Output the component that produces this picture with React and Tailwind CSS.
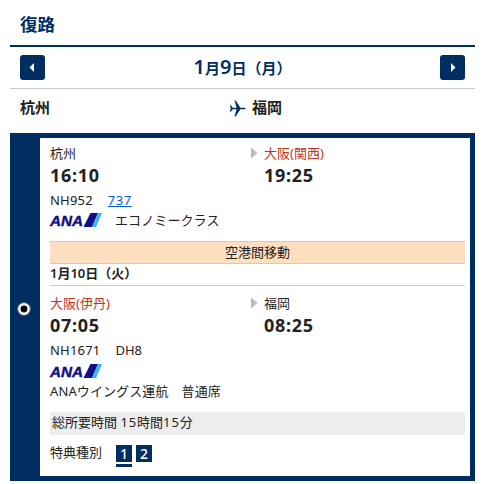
const AirlineLogo = () => (
  <svg width="52" height="16" viewBox="0 0 52 16" className="block overflow-visible" aria-label="ANA">
    <text
      x="0"
      y="13"
      textLength="33"
      lengthAdjust="spacingAndGlyphs"
      fill="#110d87"
      stroke="#110d87"
      strokeWidth="0.4"
      fontFamily="Liberation Sans, sans-serif"
      fontSize="14"
      fontWeight="700"
      fontStyle="italic"
    >
      ANA
    </text>
    <path d="M40.5 0H48L42 14H33.5Z" fill="#110d87" />
    <path d="M48 0H52L46 14H42Z" fill="#35b4ee" />
  </svg>
);

const PlaneIcon = () => (
  <svg width="16" height="17" viewBox="0 0 16 17" className="block" fill="#002e63">
    <path d="M0 5.3h.9l1.9 2.5h3.8L4.5.4h1.1l4.8 7.4h3.2c1.3 0 2.2.3 2.2.7s-.9.7-2.2.7h-3.2l-4.8 7.4H4.5l2.1-7.4H2.8L.9 11.7H0l.7-3.2z" />
  </svg>
);

const DayButton = ({ label, points }) => (
  <button
    type="button"
    aria-label={label}
    className="flex h-[25px] w-[25px] items-center justify-center rounded-[3px] bg-[#002e63]"
  >
    <svg width="25" height="25" viewBox="0 0 25 25" fill="#fff">
      <polygon points={points} />
    </svg>
  </button>
);

const Stop = ({ name, time, changed, arrival }) => (
  <div className={arrival ? 'flex' : 'flex w-[201px]'}>
    {arrival && (
      <svg width="13" height="30" viewBox="0 0 13 30" fill="#bbb">
        <polygon points="0,9.5 6.5,15 0,20.5" />
      </svg>
    )}
    <div>
      <div className={`h-[30px] leading-[30px] ${changed ? 'text-[#c3341b]' : ''}`}>{name}</div>
      <div className="h-[18px] text-[18px] leading-[15px] font-bold tracking-[0.7px]">{time}</div>
    </div>
  </div>
);

const Segment = ({ from, to }) => (
  <div className="flex">
    <Stop {...from} />
    <Stop {...to} arrival />
  </div>
);

const App = () => (
  <main className="h-[484px] w-[486px] bg-white pl-[10px] font-['Noto_Sans','Noto_Sans_CJK_JP',sans-serif] text-[13px] text-[#222]">
    <div className="w-[465px]">
      <h1 className="h-[47px] border-b-2 border-[#002e63] pl-[10px] text-[17.5px] leading-[49px] font-bold text-[#002e63]">
        復路
      </h1>

      {/* Day navigation */}
      <div className="flex h-[42px] items-center justify-between border-b border-[#ccc] px-[10px]">
        <DayButton label="前の日" points="9.5,12.5 14,8 14,17" />
        <p className="text-[15px] leading-[40px] font-bold text-[#002e63]">
          <span className="text-[20px] font-semibold">1</span>月
          <span className="text-[20px] font-semibold">9</span>日（月）
        </p>
        <DayButton label="次の日" points="15.5,12.5 11,8 11,17" />
      </div>

      {/* Route */}
      <div className="flex h-[44px] items-center pl-[10px] text-[15px] leading-[37px] font-bold">
        <span className="h-[44px] w-[210px]">杭州</span>
        <span className="-mt-[6px]">
          <PlaneIcon />
        </span>
        <span className="ml-[6px] h-[44px]">福岡</span>
      </div>

      {/* Itinerary */}
      <label className="flex h-[348px] bg-[#002e63] py-[5px] pr-[5px]">
        <span className="flex w-[30px] items-center justify-center">
          <input type="radio" name="flight" defaultChecked className="peer sr-only" />
          <svg width="14" height="14" viewBox="0 0 14 14" className="mt-[3px] mr-[2px]">
            <circle cx="7" cy="7" r="6.2" fill="#fff" stroke="#888" />
            <circle cx="7" cy="7" r="3.4" fill="#000" />
          </svg>
        </span>

        <div className="flex-1 bg-white pr-[5px] pl-[10px]">
          <Segment
            from={{ name: '杭州', time: '16:10' }}
            to={{ name: '大阪(関西)', time: '19:25', changed: true }}
          />
          <div className="flex h-[27px] gap-[15px] leading-[29px]">
            <span className="tracking-[0.2px]">NH952</span>
            <a href="#aircraft" className="text-[#0060df] underline tracking-[0.5px]">
              737
            </a>
          </div>
          <div className="flex h-[28px] gap-[13px]">
            <AirlineLogo />
            <span className="leading-[15px] tracking-[0.1px]">エコノミークラス</span>
          </div>

          <p className="h-[23px] border-y border-[#ccc] bg-[#ffdfbf] text-center leading-[20px]">
            空港間移動
          </p>
          <p className="h-[22px] border-b border-[#ccc] text-[13px] leading-[18px] font-semibold">
            1月10日（火）
          </p>

          <div className="pt-[2px]">
            <Segment
              from={{ name: '大阪(伊丹)', time: '07:05', changed: true }}
              to={{ name: '福岡', time: '08:25' }}
            />
          </div>
          <div className="flex h-[28px] gap-[15px] leading-[29px]">
            <span className="tracking-[0.2px]">NH1671</span>
            <span>DH8</span>
          </div>
          <div className="h-[17px]">
            <AirlineLogo />
          </div>
          <p className="h-[31px] leading-[21px] tracking-[0.1px]">ANAウイングス運航　普通席</p>

          <p className="h-[23px] bg-[#ededed] pl-[2px] leading-[21px]">
            総所要時間 <span className="tracking-[0.9px]">15</span>時間
            <span className="tracking-[0.9px]">15</span>分
          </p>

          <div className="flex h-[41px] pt-[10px]">
            <span className="w-[66px] leading-[15px]">特典種別</span>
            <span className="h-[17px] w-4 bg-[#002e63] text-center text-[14px] leading-[17px] font-medium text-white shadow-[0_2px_0_#fff,0_5px_0_#002e63]">
              1
            </span>
            <span className="ml-1 h-[17px] w-4 bg-[#002e63] text-center text-[14px] leading-[17px] font-medium text-white">
              2
            </span>
          </div>
        </div>
      </label>
    </div>
  </main>
);

export default App;
